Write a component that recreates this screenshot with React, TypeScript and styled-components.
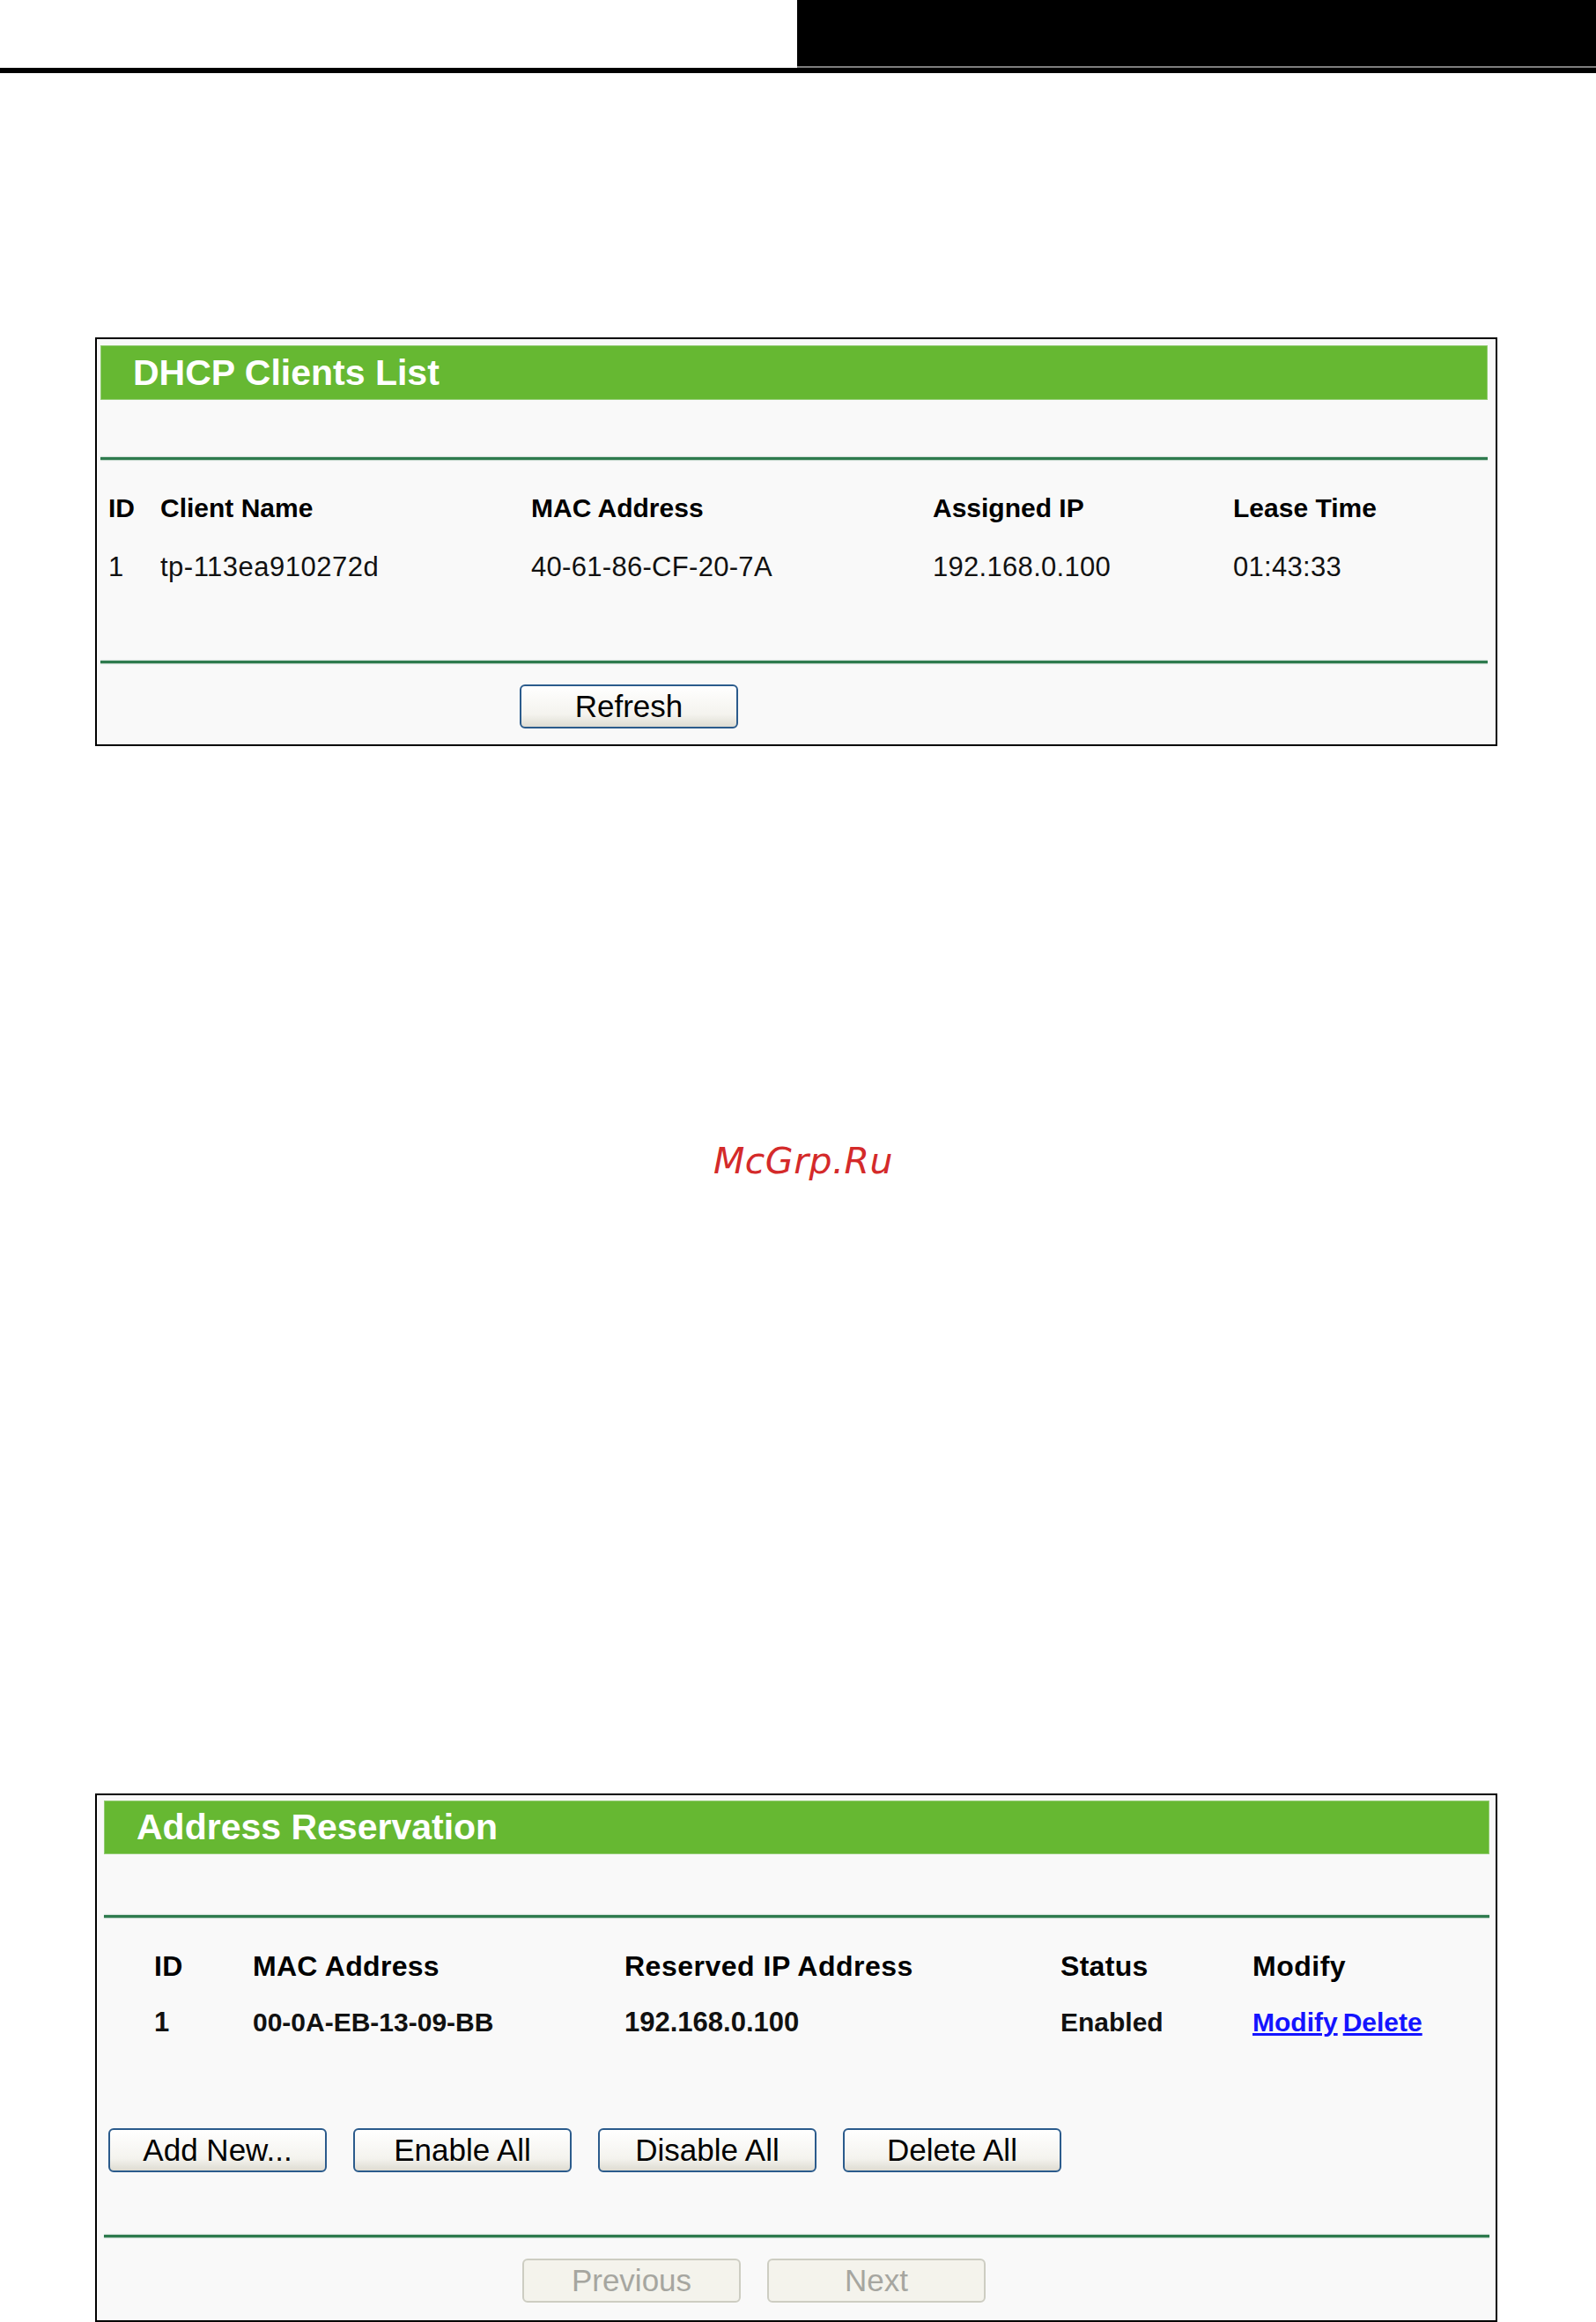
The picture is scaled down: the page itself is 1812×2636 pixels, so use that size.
import React from 'react';
import styled, { createGlobalStyle } from 'styled-components';

const GlobalStyle = createGlobalStyle`
  html, body {
    margin: 0;
    padding: 0;
    background: #fff;
  }
  body {
    font-family: "Liberation Sans", Arial, sans-serif;
    color: #000;
  }
`;

const Page = styled.div`
  width: 1812px;
  min-height: 2636px;
  background: #fff;
`;

const TopBar = styled.header`
  display: flex;
  justify-content: flex-end;
  border-bottom: 6px solid #000;
`;

const TopBlock = styled.div`
  width: 907px;
  height: 75px;
  background: #000;
  border-bottom: 2px solid #7d7d7d;
`;

const Content = styled.main`
  padding: 300px 112px 0 108px;
`;

const Panel = styled.section<{ $padL: number; $padR: number; $padT: number }>`
  box-sizing: border-box;
  width: 1592px;
  border: 2px solid #000;
  background: #f9f9f9;
  padding: ${p => p.$padT}px ${p => p.$padR}px 0 ${p => p.$padL}px;
`;

const TitleBar = styled.h2<{ $h: number }>`
  box-sizing: border-box;
  margin: 0;
  height: ${p => p.$h}px;
  background: #66b832;
  border: 1px solid #93cc73;
  color: #fff;
  font: bold 41px/${p => p.$h - 2}px "Liberation Sans", Arial, sans-serif;
  padding-left: 36px;
`;

const Rule = styled.div<{ $top: number }>`
  height: 3px;
  margin-top: ${p => p.$top}px;
  background: #2e7b4e;
  box-shadow: 0 1px 1px rgba(46, 123, 78, 0.3), 0 -1px 1px rgba(46, 123, 78, 0.2);
`;

const Grid = styled.div<{ $cols: string; $row: number; $padL: number; $padT: number; $padB: number }>`
  display: grid;
  grid-template-columns: ${p => p.$cols};
  grid-auto-rows: ${p => p.$row}px;
  align-items: center;
  padding: ${p => p.$padT}px 0 ${p => p.$padB}px ${p => p.$padL}px;
`;

const HeadCell = styled.div<{ $size: number; $spacing?: number }>`
  font-weight: bold;
  font-size: ${p => p.$size}px;
  letter-spacing: ${p => p.$spacing ?? 0}px;
  white-space: nowrap;
  color: #000;
`;

const Cell = styled.div<{ $size: number; $bold?: boolean; $spacing?: number }>`
  font-size: ${p => p.$size}px;
  font-weight: ${p => (p.$bold ? 'bold' : 'normal')};
  letter-spacing: ${p => p.$spacing ?? 0}px;
  white-space: nowrap;
  color: #111;
`;

const LinkText = styled.a`
  color: #1414ff;
  font-weight: bold;
  text-decoration: underline;
  cursor: pointer;
  & + & {
    margin-left: 6px;
  }
`;

const ButtonRow = styled.div<{ $padL: number; $padT: number; $padB: number }>`
  display: flex;
  gap: 30px;
  padding: ${p => p.$padT}px 0 ${p => p.$padB}px ${p => p.$padL}px;
`;

const Button = styled.button`
  box-sizing: border-box;
  width: 248px;
  height: 50px;
  border: 2px solid #2b5b8c;
  border-radius: 6px;
  background: linear-gradient(#ffffff, #f4f3ee 70%, #dedcd2);
  font: 35px/44px "Liberation Sans", Arial, sans-serif;
  color: #000;
  padding: 0;
  cursor: pointer;

  &:disabled {
    border-color: #cdcdc2;
    background: #f4f3ec;
    color: #a6a6a0;
    cursor: default;
  }
`;

const Watermark = styled.div`
  margin: 447px 0 694px;
  padding-left: 16px;
  text-align: center;
  font: italic 41px/48px "DejaVu Sans", Verdana, sans-serif;
  color: #d42a2a;
  letter-spacing: 0.5px;
`;

const clients = [
  { id: 1, name: 'tp-113ea910272d', mac: '40-61-86-CF-20-7A', ip: '192.168.0.100', lease: '01:43:33' },
];

const reservations = [
  { id: 1, mac: '00-0A-EB-13-09-BB', ip: '192.168.0.100', status: 'Enabled' },
];

const App: React.FC = () => {
  return (
    <Page>
      <GlobalStyle />
      <TopBar>
        <TopBlock />
      </TopBar>

      <Content>
        <Panel $padT={7} $padL={4} $padR={9}>
          <TitleBar $h={62}>DHCP Clients List</TitleBar>
          <Rule $top={65} />
          <Grid $cols="59px 421px 456px 341px 1fr" $row={67} $padL={9} $padT={21} $padB={73}>
            <HeadCell $size={30}>ID</HeadCell>
            <HeadCell $size={30}>Client Name</HeadCell>
            <HeadCell $size={30}>MAC Address</HeadCell>
            <HeadCell $size={30}>Assigned IP</HeadCell>
            <HeadCell $size={30}>Lease Time</HeadCell>
            {clients.map(c => (
              <React.Fragment key={c.id}>
                <Cell $size={31} $spacing={0.5}>{c.id}</Cell>
                <Cell $size={31} $spacing={0.5}>{c.name}</Cell>
                <Cell $size={31} $spacing={0.3}>{c.mac}</Cell>
                <Cell $size={31} $spacing={0.3}>{c.ip}</Cell>
                <Cell $size={31} $spacing={0.3}>{c.lease}</Cell>
              </React.Fragment>
            ))}
          </Grid>
          <Rule $top={0} />
          <ButtonRow $padL={476} $padT={24} $padB={18}>
            <Button>Refresh</Button>
          </ButtonRow>
        </Panel>

        <Watermark>McGrp.Ru</Watermark>

        <Panel $padT={6} $padL={8} $padR={7}>
          <TitleBar $h={61}>Address Reservation</TitleBar>
          <Rule $top={69} />
          <Grid $cols="112px 422px 495px 218px 1fr" $row={64} $padL={57} $padT={23} $padB={0}>
            <HeadCell $size={32} $spacing={0.3}>ID</HeadCell>
            <HeadCell $size={32} $spacing={0.3}>MAC Address</HeadCell>
            <HeadCell $size={32} $spacing={0.5}>Reserved IP Address</HeadCell>
            <HeadCell $size={32} $spacing={0.3}>Status</HeadCell>
            <HeadCell $size={32} $spacing={0.5}>Modify</HeadCell>
            {reservations.map(r => (
              <React.Fragment key={r.id}>
                <Cell $size={31} $bold>{r.id}</Cell>
                <Cell $size={30} $bold>{r.mac}</Cell>
                <Cell $size={31} $bold>{r.ip}</Cell>
                <Cell $size={30} $bold>{r.status}</Cell>
                <Cell $size={30}>
                  <LinkText>Modify</LinkText>
                  <LinkText>Delete</LinkText>
                </Cell>
              </React.Fragment>
            ))}
          </Grid>
          <ButtonRow $padL={5} $padT={88} $padB={0}>
            <Button>Add New...</Button>
            <Button>Enable All</Button>
            <Button>Disable All</Button>
            <Button>Delete All</Button>
          </ButtonRow>
          <Rule $top={71} />
          <ButtonRow $padL={475} $padT={24} $padB={20}>
            <Button disabled>Previous</Button>
            <Button disabled>Next</Button>
          </ButtonRow>
        </Panel>
      </Content>
    </Page>
  );
};

export default App;
